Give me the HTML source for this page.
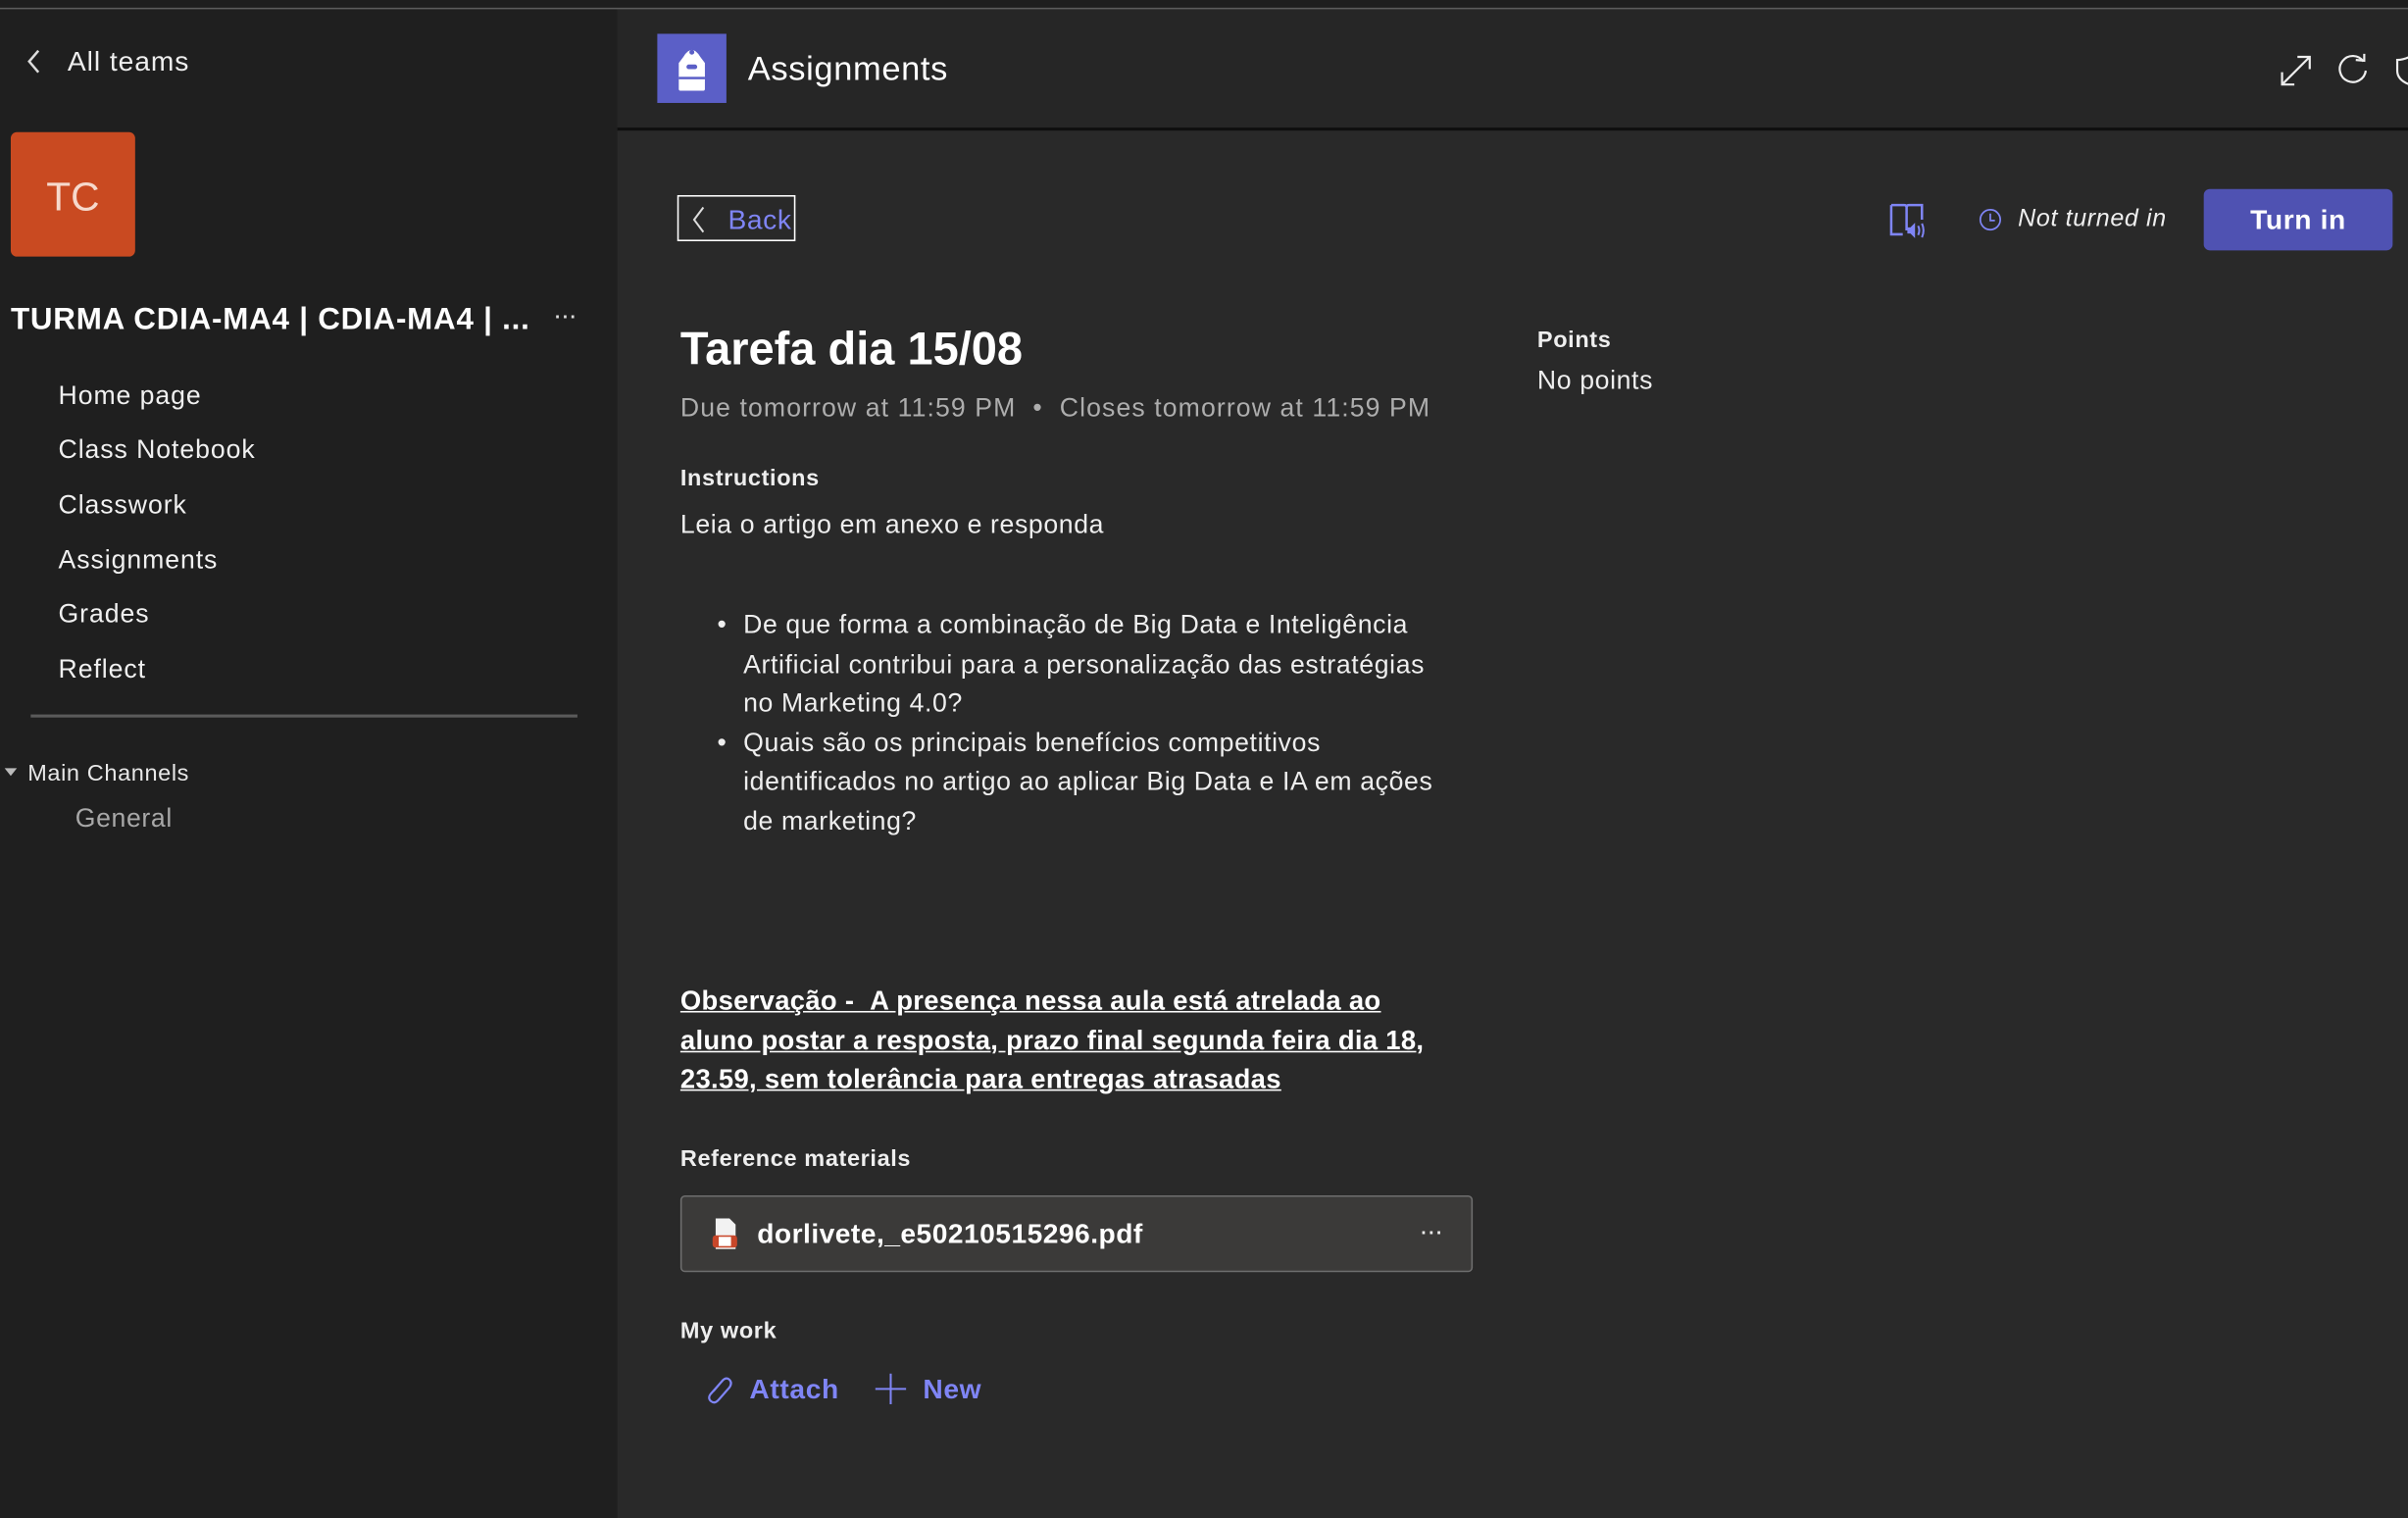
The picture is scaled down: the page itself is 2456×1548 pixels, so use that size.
<!DOCTYPE html>
<html><head><meta charset="utf-8"><style>
html,body{margin:0;padding:0;background:#292929;overflow:hidden;width:2456px;height:1548px}
#w{position:absolute;left:0;top:0;width:1568px;height:988px;transform:scale(1.56633,1.5668);transform-origin:0 0;font-family:"Liberation Sans",sans-serif;color:#fff;background:#292929;letter-spacing:0.4px}
.a{position:absolute;white-space:nowrap;line-height:1}
#sb{position:absolute;left:0;top:0;width:402px;height:988px;background:#1f1f1f}
#top{position:absolute;left:0;top:0;width:1568px;height:5px;background:#1e1e1e;border-bottom:1px solid #5c5c5c}
#hd{position:absolute;left:402px;top:6px;width:1166px;height:77px;background:#262626;border-bottom:2px solid #0f0f0f}
.nav{position:absolute;left:38px;font-size:17px;color:#f0f0f0;letter-spacing:0.6px}
.b{font-size:17px;color:#eee}
</style></head><body><div id="w">
<div id="sb"></div>
<div id="hd"></div>
<div id="top"></div>
<svg class="a" style="left:15px;top:31px" width="14" height="18"><path d="M10 2 L4 9 L10 16" stroke="#ddd" stroke-width="1.6" fill="none"/></svg>
<div class="a" style="left:44px;top:31px;font-size:18px;font-weight:500;color:#eee;letter-spacing:0.6px">All teams</div>
<div class="a" style="left:7px;top:86px;width:81px;height:81px;background:#c94a21;border-radius:4px;text-align:center;line-height:84px;font-size:26px;color:#f6d9cc;letter-spacing:0">TC</div>
<div class="a" style="left:7px;top:198px;font-size:20px;font-weight:bold;color:#fff;letter-spacing:0.5px">TURMA CDIA-MA4 | CDIA-MA4 | ...</div>
<div class="a" style="left:360px;top:196px;font-size:18px;color:#ddd;letter-spacing:-1px">···</div>
<div class="a nav" style="top:249px">Home page</div>
<div class="a nav" style="top:284px">Class Notebook</div>
<div class="a nav" style="top:320px">Classwork</div>
<div class="a nav" style="top:356px">Assignments</div>
<div class="a nav" style="top:391px">Grades</div>
<div class="a nav" style="top:427px">Reflect</div>
<div class="a" style="left:20px;top:465px;width:356px;height:2px;background:#5a5a5a"></div>
<svg class="a" style="left:2px;top:499px" width="10" height="8"><path d="M1 1 L9 1 L5 6Z" fill="#bbb"/></svg>
<div class="a" style="left:18px;top:496px;font-size:15px;color:#e8e8e8">Main Channels</div>
<div class="a" style="left:49px;top:524px;font-size:17px;color:#a8a8a8">General</div>

<div class="a" style="left:428px;top:22px;width:45px;height:45px;background:#5b5fc7"></div>
<svg class="a" style="left:428px;top:22px" width="45" height="45"><path d="M17 15 Q22.5 6 28 15 L31 19 L31 36 Q31 37 30 37 L15 37 Q14 37 14 36 L14 19Z" fill="#fff"/><circle cx="22.5" cy="12" r="1.6" fill="#5b5fc7"/><rect x="19" y="20" width="7" height="3" rx="1.5" fill="#5b5fc7"/><rect x="14" y="28" width="17" height="1.6" fill="#5b5fc7"/></svg>
<div class="a" style="left:487px;top:34px;font-size:22px;color:#fff">Assignments</div>
<svg class="a" style="left:1483px;top:34px" width="24" height="24"><path d="M3 21 L21 3 M13 3 L21 3 L21 11 M3 13 L3 21 L11 21" stroke="#eee" stroke-width="1.4" fill="none"/></svg>
<svg class="a" style="left:1520px;top:34px" width="24" height="24"><path d="M19 6 A8.5 8.5 0 1 0 20.5 12" stroke="#eee" stroke-width="1.4" fill="none"/><path d="M14 5 L19.5 5.5 L19.5 1" stroke="#eee" stroke-width="1.4" fill="none"/></svg>
<svg class="a" style="left:1558px;top:34px" width="10" height="24"><path d="M11 3 Q7 5 3 5 L3 12 Q3 18 11 21" stroke="#eee" stroke-width="1.4" fill="none"/></svg>

<div class="a" style="left:441px;top:127px;width:75px;height:28px;border:1.5px solid #fff"></div>
<svg class="a" style="left:449px;top:134px" width="12" height="18"><path d="M9 1 L3 9 L9 17" stroke="#ddd" stroke-width="1.3" fill="none"/></svg>
<div class="a" style="left:474px;top:134px;font-size:18px;font-weight:500;color:#7f85f5">Back</div>
<svg class="a" style="left:1229px;top:131px" width="28" height="26"><path d="M2.5 2.5 L11 2.5 Q12.5 2.5 12.5 4 L12.5 19 M12.5 4 Q12.5 2.5 14 2.5 L22.5 2.5 L22.5 12 M2.5 2.5 L2.5 21.5 L10 21.5" stroke="#7f85f5" stroke-width="1.6" fill="none"/><path d="M13 17 L15 17 L18 14 L18 24 L15 21 L13 21Z" fill="#7f85f5"/><path d="M20 16 Q21.5 19 20 22 M22.5 14.5 Q24.5 19 22.5 23.5" stroke="#7f85f5" stroke-width="1.3" fill="none"/></svg>
<svg class="a" style="left:1288px;top:135px" width="16" height="16"><circle cx="8" cy="8" r="6.5" stroke="#7f85f5" stroke-width="1.1" fill="none"/><path d="M8 4 L8 8.5 L11 8.5" stroke="#7f85f5" stroke-width="1.1" fill="none"/></svg>
<div class="a" style="left:1314px;top:135px;font-size:16px;font-style:italic;color:#eee">Not turned in</div>
<div class="a" style="left:1435px;top:123px;width:123px;height:40px;background:#4f52b2;border-radius:4px;text-align:center;line-height:41px;font-size:18px;font-weight:bold;color:#fff">Turn in</div>

<div class="a" style="left:443px;top:213px;font-size:30px;font-weight:bold;color:#fff;letter-spacing:0">Tarefa dia 15/08</div>
<div class="a" style="left:443px;top:257px;font-size:17px;color:#adadad;letter-spacing:0.7px">Due tomorrow at 11:59 PM &nbsp;•&nbsp; Closes tomorrow at 11:59 PM</div>
<div class="a" style="left:1001px;top:214px;font-size:15px;font-weight:bold;color:#eee">Points</div>
<div class="a b" style="left:1001px;top:239px">No points</div>
<div class="a" style="left:443px;top:304px;font-size:15px;font-weight:bold;color:#eee">Instructions</div>
<div class="a b" style="left:443px;top:333px">Leia o artigo em anexo e responda</div>
<div class="a b" style="left:484px;top:394px;line-height:25.6px">
<div style="position:relative">De que forma a combinação de Big Data e Inteligência<br>Artificial contribui para a personalização das estratégias<br>no Marketing 4.0?<span style="position:absolute;left:-17px;top:0">•</span></div>
<div style="position:relative">Quais são os principais benefícios competitivos<br>identificados no artigo ao aplicar Big Data e IA em ações<br>de marketing?<span style="position:absolute;left:-17px;top:0">•</span></div>
</div>
<div class="a" style="left:443px;top:639px;line-height:25.6px;font-size:17.5px;font-weight:bold;text-decoration:underline;color:#fff;letter-spacing:0.2px">Observação - &nbsp;A presença nessa aula está atrelada ao<br>aluno postar a resposta, prazo final segunda feira dia 18,<br>23.59, sem tolerância para entregas atrasadas</div>
<div class="a" style="left:443px;top:747px;font-size:15px;font-weight:bold;color:#eee">Reference materials</div>
<div class="a" style="left:443px;top:778px;width:514px;height:48px;background:#3b3a39;border:1px solid #6e6e6e;border-radius:3px"></div>
<svg class="a" style="left:462px;top:792px" width="20" height="22"><path d="M4 1 L13 1 L17 5 L17 21 L4 21Z" fill="#f2f2f2"/><rect x="2" y="12" width="16" height="8" rx="2" fill="#c8472a"/><rect x="6" y="13" width="8" height="6" fill="#fff"/></svg>
<div class="a" style="left:493px;top:794px;font-size:18px;font-weight:bold;color:#fff;letter-spacing:0.3px">dorlivete,_e50210515296.pdf</div>
<div class="a" style="left:924px;top:792px;font-size:18px;color:#eee;letter-spacing:-1px">···</div>
<div class="a" style="left:443px;top:859px;font-size:15px;font-weight:bold;color:#eee">My work</div>
<svg class="a" style="left:457px;top:893px" width="22" height="22"><path d="M14 5 L6 14 Q3.5 17 6 19 Q8.5 21 11 18 L18 10 Q20 7 18 5 Q16 3 13.5 5.5 L7.5 12.5" stroke="#7f85f5" stroke-width="1.4" fill="none"/></svg>
<div class="a" style="left:488px;top:895px;font-size:18px;font-weight:bold;color:#7f85f5">Attach</div>
<svg class="a" style="left:569px;top:893px" width="22" height="22"><path d="M11 1 L11 21 M1 11 L21 11" stroke="#7f85f5" stroke-width="1.3"/></svg>
<div class="a" style="left:601px;top:895px;font-size:18px;font-weight:bold;color:#7f85f5">New</div>
</div></body></html>
